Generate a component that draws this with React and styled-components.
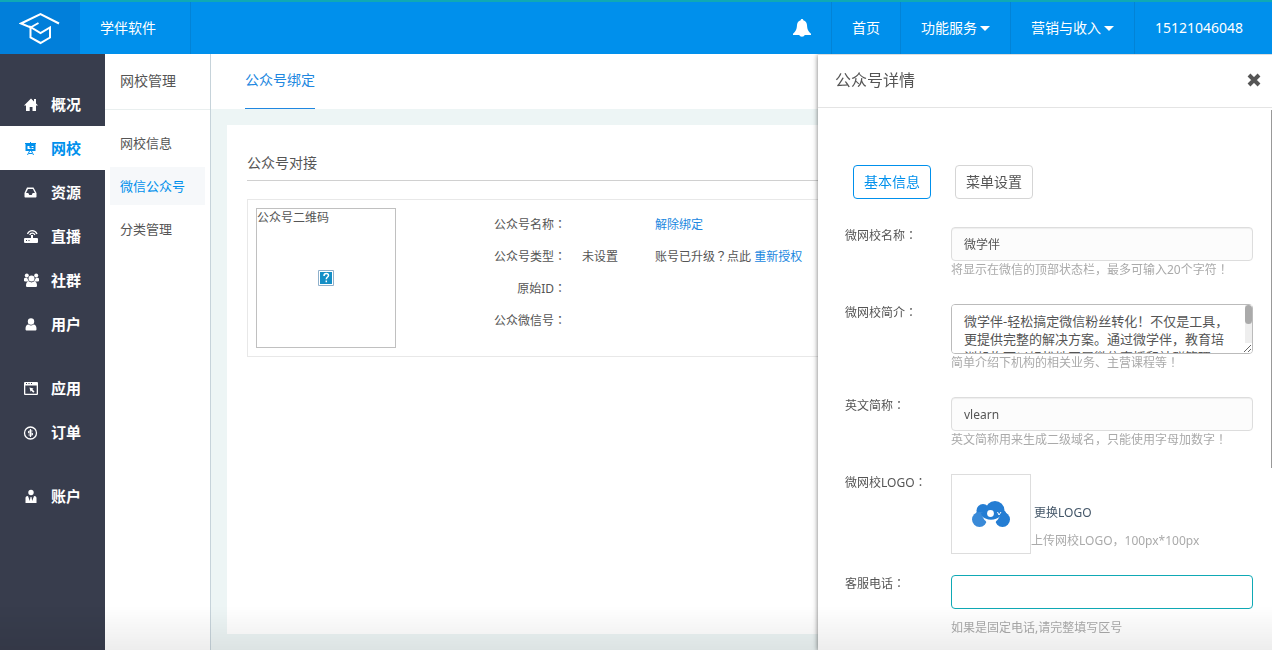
import React from "react";
import styled, { createGlobalStyle, css } from "styled-components";

const GlobalStyle = createGlobalStyle`
  * {
    box-sizing: border-box;
  }

  body {
    margin: 0;
    color: #555;
    background: #edf5f5;
    font-family: "Noto Sans", "Noto Sans CJK SC", sans-serif;
    font-size: 12px;
    line-height: 18px;
  }

  button,
  input,
  textarea {
    font-family: inherit;
    color: inherit;
  }

  a {
    color: #2087e0;
    text-decoration: none;
  }

  svg {
    display: block;
    flex-shrink: 0;
  }
`;

const Page = styled.div`
  min-height: 100vh;
  display: flex;
  flex-direction: column;
  overflow: hidden;
`;

const TopBar = styled.header`
  height: 54px;
  display: flex;
  border-top: 2px solid #0fa9b5;
  background: #0090ec;
  color: #fff;
  font-size: 14px;
`;

const LogoLink = styled.a`
  width: 80px;
  display: flex;
  align-items: center;
  justify-content: center;
  background: #017fda;
`;

const Company = styled.div`
  display: flex;
  align-items: center;
  padding: 0 34px 0 20px;
  border-right: 1px solid #0283d6;
`;

const TopNav = styled.nav`
  display: flex;
  margin-left: auto;
`;

const TopLink = styled.a`
  display: flex;
  align-items: center;
  gap: 3px;
  padding: 0 20px;
  color: #fff;
  border-right: 1px solid #0283d6;

  &:last-child {
    padding-right: 29px;
    border-right: 0;
  }
`;

const Caret = styled.span`
  border: 5px solid transparent;
  border-top-color: #fff;
  border-bottom: 0;
`;

const Body = styled.div`
  flex: 1;
  display: flex;
`;

const SideNav = styled.nav`
  width: 105px;
  flex-shrink: 0;
  padding-top: 28px;
  background: #383d4d;
`;

const SideGroup = styled.div`
  margin-bottom: 20px;
`;

const SideLink = styled.a`
  height: 44px;
  display: flex;
  align-items: center;
  gap: 12px;
  padding-left: 23px;
  font-size: 15px;
  font-weight: bold;
  color: ${props => (props.$active ? "#0090ec" : "#fff")};
  background: ${props => (props.$active ? "#fff" : "transparent")};
`;

const SubNav = styled.nav`
  width: 106px;
  flex-shrink: 0;
  background: #fff;
  border-right: 1px solid #c6d3da;
`;

const SubTitle = styled.h2`
  height: 56px;
  margin: 0 0 14px;
  padding-left: 15px;
  font-size: 14px;
  font-weight: normal;
  line-height: 54px;
  border-bottom: 1px solid #e9efef;
`;

const SubLink = styled.a`
  display: block;
  margin: 0 5px 5px;
  padding-left: 10px;
  font-size: 13px;
  line-height: 38px;
  color: ${props => (props.$active ? "#0090ec" : "#555")};
  background: ${props => (props.$active ? "#f6f8fa" : "transparent")};
`;

const Main = styled.main`
  flex: 1;
  display: flex;
  flex-direction: column;
`;

const Tabs = styled.div`
  height: 55px;
  padding-left: 34px;
  display: flex;
  background: #fff;
`;

const Tab = styled.a`
  font-size: 14px;
  line-height: 52px;
  border-bottom: 1px solid #2087e0;
`;

const Card = styled.section`
  flex: 1;
  margin: 16px;
  padding: 20px;
  background: #fff;
`;

const CardTitle = styled.h3`
  margin: 0 0 18px;
  font-size: 14px;
  font-weight: normal;
  line-height: 35px;
  border-bottom: 1px solid #d0d0d0;
`;

const Account = styled.div`
  display: flex;
  padding: 8px;
  border: 1px solid #e8e8e8;
`;

const QrBox = styled.div`
  width: 140px;
  height: 140px;
  border: 1px solid #c0c0c0;
`;

const MissingImage = styled.div`
  display: flex;
  justify-content: center;
  padding-top: 43px;
`;

const AccountTable = styled.table`
  align-self: flex-start;
  margin: 1px 0 0 98px;
  border-collapse: collapse;
  white-space: nowrap;

  th,
  td {
    height: 32px;
    padding: 0;
    font-weight: normal;
    text-align: left;
  }

  th {
    width: 72px;
    text-align: right;
  }

  td:nth-child(2) {
    width: 89px;
    padding-left: 16px;
  }
`;

// full-width marks sit in the middle of their square only in the JP face
const WideMark = styled.span`
  font-family: "Noto Sans CJK JP", sans-serif;
  line-height: 1;
`;

const Drawer = styled.aside`
  position: fixed;
  top: 54px;
  right: 0;
  bottom: 0;
  width: 454px;
  display: flex;
  flex-direction: column;
  background: #fff;
  border-top: 1px solid #ddd;
  box-shadow: 0 1px 5px rgba(0, 0, 0, 0.55);
  clip-path: inset(0 0 0 -8px);
`;

const DrawerHeader = styled.div`
  display: flex;
  align-items: center;
  justify-content: space-between;
  height: 53px;
  padding: 0 11px 2px 17px;
  border-bottom: 1px solid #e4e4e4;
`;

const DrawerTitle = styled.h2`
  margin: 0;
  font-size: 16px;
  font-weight: normal;
`;

const CloseButton = styled.button`
  padding: 0;
  border: 0;
  background: none;
  cursor: pointer;
`;

const DrawerBody = styled.div`
  flex: 1;
  padding: 57px 19px 0 27px;
  overflow: hidden;
`;

const DrawerThumb = styled.div`
  position: absolute;
  top: 55px;
  right: 0;
  width: 1px;
  height: 358px;
  background: #999;
`;

const Switcher = styled.div`
  display: flex;
  gap: 24px;
  margin-bottom: 28px;
  padding-left: 8px;
`;

const SwitchButton = styled.button`
  width: 78px;
  height: 34px;
  padding: 0 0 2px;
  font-size: 14px;
  color: ${props => (props.$active ? "#0090ec" : "#555")};
  background: #fff;
  border: 1px solid ${props => (props.$active ? "#0090ec" : "#d5d5d5")};
  border-radius: 4px;
  cursor: pointer;
`;

const FieldRow = styled.div`
  display: flex;
  margin-bottom: 21px;
`;

const FieldLabel = styled.label`
  width: 106px;
  flex-shrink: 0;
`;

const FieldControl = styled.div`
  flex: 1;
`;

const control = css`
  display: block;
  width: 100%;
  border: 1px solid #ddd;
  border-radius: 4px;
  outline: 0;
`;

const TextInput = styled.input`
  ${control}
  height: 34px;
  padding: 0 12px;
  font-size: 12px;
  background: #fcfcfc;
  box-shadow: inset 0 1px 1px rgba(0, 0, 0, 0.06);

  ${props =>
    props.$highlight &&
    css`
      background: #fff;
      border-color: #0fa9b5;
      box-shadow: none;
    `}
`;

const TextAreaBox = styled.div`
  position: relative;
`;

const TextArea = styled.textarea`
  ${control}
  height: 50px;
  padding: 7px 20px 7px 12px;
  font-size: 13px;
  line-height: 18px;
  background: #fff;
  border-color: #bbb;
  scrollbar-width: none;
`;

const TextAreaTrack = styled.div`
  position: absolute;
  top: 1px;
  right: 1px;
  width: 7px;
  height: 38px;
  background: #eee;
  pointer-events: none;

  &::before {
    content: "";
    display: block;
    height: 19px;
    border-radius: 4px;
    background: #aaa;
  }
`;

const Hint = styled.p`
  margin: ${props => (props.$spaced ? "10px 0 4px" : "0 0 4px")};
  color: #aaa;
`;

const LogoPicker = styled.div`
  flex: 1;
  display: flex;
`;

const LogoPreview = styled.div`
  width: 80px;
  height: 80px;
  display: flex;
  align-items: center;
  justify-content: center;
  border: 1px solid #ddd;
`;

const LogoActions = styled.div`
  padding-top: 30px;
`;

const LogoButton = styled.button`
  display: block;
  margin-bottom: 10px;
  padding: 0 3px;
  font-size: 12px;
  line-height: 18px;
  color: #435668;
  border: 0;
  background: none;
  cursor: pointer;
`;

const BottomFade = styled.div`
  position: fixed;
  left: 0;
  right: 0;
  bottom: 0;
  height: 44px;
  background: linear-gradient(rgba(0, 0, 0, 0), rgba(0, 0, 0, 0.07));
  pointer-events: none;
`;

const SchoolLogo = () => (
  <svg width="42" height="34" viewBox="0 0 42 34" fill="none" stroke="#fff" strokeWidth="2">
    <path d="M40 12.500 21.500 3 2 12.500l9.500 4 8-4.500" />
    <path d="M11.500 16v10.500l10 5.500 9.500-5.500V16.500L21.500 22Z" />
  </svg>
);

const BellIcon = () => (
  <svg width="18" height="18" viewBox="0 0 18 18" fill="#fff">
    <path d="M9 0c.8 0 1.300.6 1.300 1.200C12.700 1.800 13.800 3.700 14 6c.2 3.800.8 6.200 4 8.700V16h-6.200a2.900 2.400 0 0 1-5.600 0H0v-1.300C3.200 12.200 3.800 9.800 4 6c.2-2.300 1.300-4.200 3.700-4.800C7.700.6 8.200 0 9 0Z" />
  </svg>
);

const CloseIcon = () => (
  <svg width="14" height="14" viewBox="0 0 14 14" stroke="#555" strokeWidth="4">
    <path d="m2 2 10 10M12 2 2 12" />
  </svg>
);

const BrandLogo = () => (
  <svg width="40" height="28" viewBox="0 0 40 28">
    <g fill="#247dd3">
      <circle cx="12" cy="10.500" r="6.500" />
      <circle cx="24" cy="10.500" r="9.500" />
      <path d="M6 11h28l3 5-8 3c-5 2-15 2-19 0l-5-5Z" />
      <circle cx="31.500" cy="19.500" r="7.500" />
    </g>
    <circle cx="8.500" cy="19.500" r="7.500" fill="#3a8ad8" />
    <path d="M11 16c4 5 14 5 18 0l-2.500 4c-3 2-3 5 0 8h-13c3-3 3-6 0-8Z" fill="#fff" />
    <path d="M10 13h20l-1 3c-4 3.700-14 3.700-18 0Z" fill="#247dd3" />
    <circle cx="19.500" cy="13.500" r="3.400" fill="#fff" />
    <path d="m26.500 12 1.500 3 2-3" fill="none" stroke="#fff" />
  </svg>
);

const MissingIcon = () => (
  <svg width="16" height="16" viewBox="0 0 16 16" fill="none">
    <path d="M.5.5h15v15H.5Z" fill="#fff" stroke="#8fb0cb" />
    <path d="M2 2h12v12H2Z" fill="#158fc6" />
    <path d="M6 6c0-3.500 4.500-3 4.500-.5C10.500 7 8.300 7 8.300 9.200M8.300 10.500v1.700" stroke="#fff" strokeWidth="1.500" />
  </svg>
);

const icons = {
  home: <path d="M7 1.500 0 8.500h2V14h3.700v-4h2.800v4H12V8.500h2l-2-2V2h-2v2.500Z" />,
  school: (
    <>
      <path fillRule="evenodd" d="M1 2h5V1h1v1h5v1h-.5v7h-10V3H1Zm2.500 3v3h3V7h-1V5Zm4 0v1h2V5Zm0 2v1h2V7Z" />
      <path d="m5.500 10-2 4M7.500 10l2 4M5 12.500h3" stroke="currentColor" fill="none" />
    </>
  ),
  inbox: (
    <path
      fillRule="evenodd"
      d="M3 2.500h6.500L12.500 8v3.500c0 .6-.4 1-1 1h-10c-.6 0-1-.4-1-1V8Zm1 1.500L2 8h2.300l1 2h2.400l1-2h2.200l-2-4Z"
    />
  ),
  live: (
    <>
      <path fillRule="evenodd" d="M1 9h6V6h2v3h4a1 1 0 0 1 1 1v3a1 1 0 0 1-1 1H1a1 1 0 0 1-1-1v-3a1 1 0 0 1 1-1Zm1 2v1h1v-1Zm2.500 0v1h1v-1Z" />
      <path d="M3.500 5c2-4.500 7.500-4.500 9.500 0M5.700 6c1-2.500 4.200-2.500 5.200 0" fill="none" stroke="currentColor" strokeWidth="1.300" />
    </>
  ),
  group: (
    <>
      <circle cx="2.800" cy="2.500" r="2" />
      <circle cx="12.200" cy="2.500" r="2" />
      <circle cx="7.500" cy="5.500" r="3" />
      <path d="M0 8V6c0-1 1-1.500 3-1.200L5 8.500H1ZM15 8V6c0-1-1-1.500-3-1.200L10 8.500h4ZM2 12.500c0-2.500 1-4 3-4l2.500 1 2.500-1c2 0 3 1.500 3 4 0 1-.6 1.500-1.500 1.500h-8C2.600 14 2 13.500 2 12.500Z" />
    </>
  ),
  user: (
    <>
      <circle cx="7" cy="4.500" r="3.200" />
      <path d="M1.500 12c0-3 1-4.500 3-4.500 1.800 1.300 3.200 1.300 5 0 2 0 3 1.500 3 4.500 0 1-.5 1.500-1.500 1.500H3c-1 0-1.500-.5-1.500-1.500Z" />
    </>
  ),
  app: (
    <>
      <path fillRule="evenodd" d="M1 1h12a1 1 0 0 1 1 1v11a1 1 0 0 1-1 1H1a1 1 0 0 1-1-1V2a1 1 0 0 1 1-1Zm.3 3.500v8.200h11.400V4.500ZM2 2v1h1V2Zm2.500 0v1h1V2ZM7 2v1h1V2Z" />
      <path d="m5.500 6.500 4 1-1 1 2 2-1.200 1.200-2-2-.8 1Z" />
    </>
  ),
  order: (
    <g fill="none" stroke="currentColor">
      <circle cx="6.500" cy="8" r="6" strokeWidth="1.300" />
      <path d="M8.500 6h-3a1 1 0 0 0 0 2h2a1 1 0 0 1 0 2h-3M6.500 4v8" strokeWidth="1.200" />
    </g>
  ),
  account: (
    <>
      <circle cx="7" cy="3.500" r="2.700" />
      <path d="M1.500 14V9c0-1.300.8-2 2.500-2l1.800 5L6.500 8h1l.7 4L10 7c1.700 0 2.500.7 2.500 2v5Z" />
    </>
  )
};

const SideIcon = ({ name }) => (
  <svg width="16" height="15" viewBox="-1 0 16 15" fill="currentColor">
    {icons[name]}
  </svg>
);

const sideGroups = [
  [
    { icon: "home", text: "概况" },
    { icon: "school", text: "网校", active: true },
    { icon: "inbox", text: "资源" },
    { icon: "live", text: "直播" },
    { icon: "group", text: "社群" },
    { icon: "user", text: "用户" }
  ],
  [
    { icon: "app", text: "应用" },
    { icon: "order", text: "订单" }
  ],
  [{ icon: "account", text: "账户" }]
];

const Field = ({ id, label, children }) => (
  <FieldRow>
    <FieldLabel htmlFor={id}>
      {label}
      <WideMark>：</WideMark>
    </FieldLabel>
    {children}
  </FieldRow>
);

const InfoRow = ({ label, value, children }) => (
  <tr>
    <th scope="row">
      {label}
      <WideMark>：</WideMark>
    </th>
    <td>{value}</td>
    <td>{children}</td>
  </tr>
);

const Header = () => (
  <TopBar>
    <LogoLink href="#" aria-label="学伴软件">
      <SchoolLogo />
    </LogoLink>
    <Company>学伴软件</Company>
    <TopNav>
      <TopLink href="#" aria-label="通知">
        <BellIcon />
      </TopLink>
      <TopLink href="#">首页</TopLink>
      <TopLink href="#">
        功能服务
        <Caret />
      </TopLink>
      <TopLink href="#">
        营销与收入
        <Caret />
      </TopLink>
      <TopLink href="#">15121046048</TopLink>
    </TopNav>
  </TopBar>
);

const DetailDrawer = () => (
  <Drawer>
    <DrawerHeader>
      <DrawerTitle>公众号详情</DrawerTitle>
      <CloseButton type="button" aria-label="关闭">
        <CloseIcon />
      </CloseButton>
    </DrawerHeader>
    <DrawerBody>
      <Switcher>
        <SwitchButton type="button" $active>
          基本信息
        </SwitchButton>
        <SwitchButton type="button">菜单设置</SwitchButton>
      </Switcher>
      <Field id="name" label="微网校名称">
        <FieldControl>
          <TextInput id="name" defaultValue="微学伴" />
          <Hint>
            将显示在微信的顶部状态栏，最多可输入20个字符<WideMark>！</WideMark>
          </Hint>
        </FieldControl>
      </Field>
      <Field id="intro" label="微网校简介">
        <FieldControl>
          <TextAreaBox>
            <TextArea
              id="intro"
              defaultValue="微学伴-轻松搞定微信粉丝转化！不仅是工具，更提供完整的解决方案。通过微学伴，教育培训机构可以轻松地开展微信直播和社群管理。"
            />
            <TextAreaTrack />
          </TextAreaBox>
          <Hint>
            简单介绍下机构的相关业务、主营课程等<WideMark>！</WideMark>
          </Hint>
        </FieldControl>
      </Field>
      <Field id="short" label="英文简称">
        <FieldControl>
          <TextInput id="short" defaultValue="vlearn" />
          <Hint>
            英文简称用来生成二级域名，只能使用字母加数字<WideMark>！</WideMark>
          </Hint>
        </FieldControl>
      </Field>
      <Field id="logo" label="微网校LOGO">
        <LogoPicker>
          <LogoPreview>
            <BrandLogo />
          </LogoPreview>
          <LogoActions>
            <LogoButton id="logo" type="button">
              更换LOGO
            </LogoButton>
            <Hint>上传网校LOGO，100px*100px</Hint>
          </LogoActions>
        </LogoPicker>
      </Field>
      <Field id="phone" label="客服电话">
        <FieldControl>
          <TextInput id="phone" $highlight />
          <Hint $spaced>如果是固定电话,请完整填写区号</Hint>
        </FieldControl>
      </Field>
    </DrawerBody>
    <DrawerThumb />
  </Drawer>
);

const App = () => (
  <Page>
    <GlobalStyle />
    <Header />
    <Body>
      <SideNav>
        {sideGroups.map((group, i) => (
          <SideGroup key={i}>
            {group.map(item => (
              <SideLink key={item.text} href="#" $active={item.active}>
                <SideIcon name={item.icon} />
                {item.text}
              </SideLink>
            ))}
          </SideGroup>
        ))}
      </SideNav>
      <SubNav>
        <SubTitle>网校管理</SubTitle>
        <SubLink href="#">网校信息</SubLink>
        <SubLink href="#" $active>
          微信公众号
        </SubLink>
        <SubLink href="#">分类管理</SubLink>
      </SubNav>
      <Main>
        <Tabs>
          <Tab href="#">公众号绑定</Tab>
        </Tabs>
        <Card>
          <CardTitle>公众号对接</CardTitle>
          <Account>
            <QrBox>
              公众号二维码
              <MissingImage>
                <MissingIcon />
              </MissingImage>
            </QrBox>
            <AccountTable>
              <tbody>
                <InfoRow label="公众号名称">
                  <a href="#">解除绑定</a>
                </InfoRow>
                <InfoRow label="公众号类型" value="未设置">
                  账号已升级<WideMark>？</WideMark>点此 <a href="#">重新授权</a>
                </InfoRow>
                <InfoRow label="原始ID" />
                <InfoRow label="公众微信号" />
              </tbody>
            </AccountTable>
          </Account>
        </Card>
      </Main>
    </Body>
    <DetailDrawer />
    <BottomFade />
  </Page>
);

export default App;
